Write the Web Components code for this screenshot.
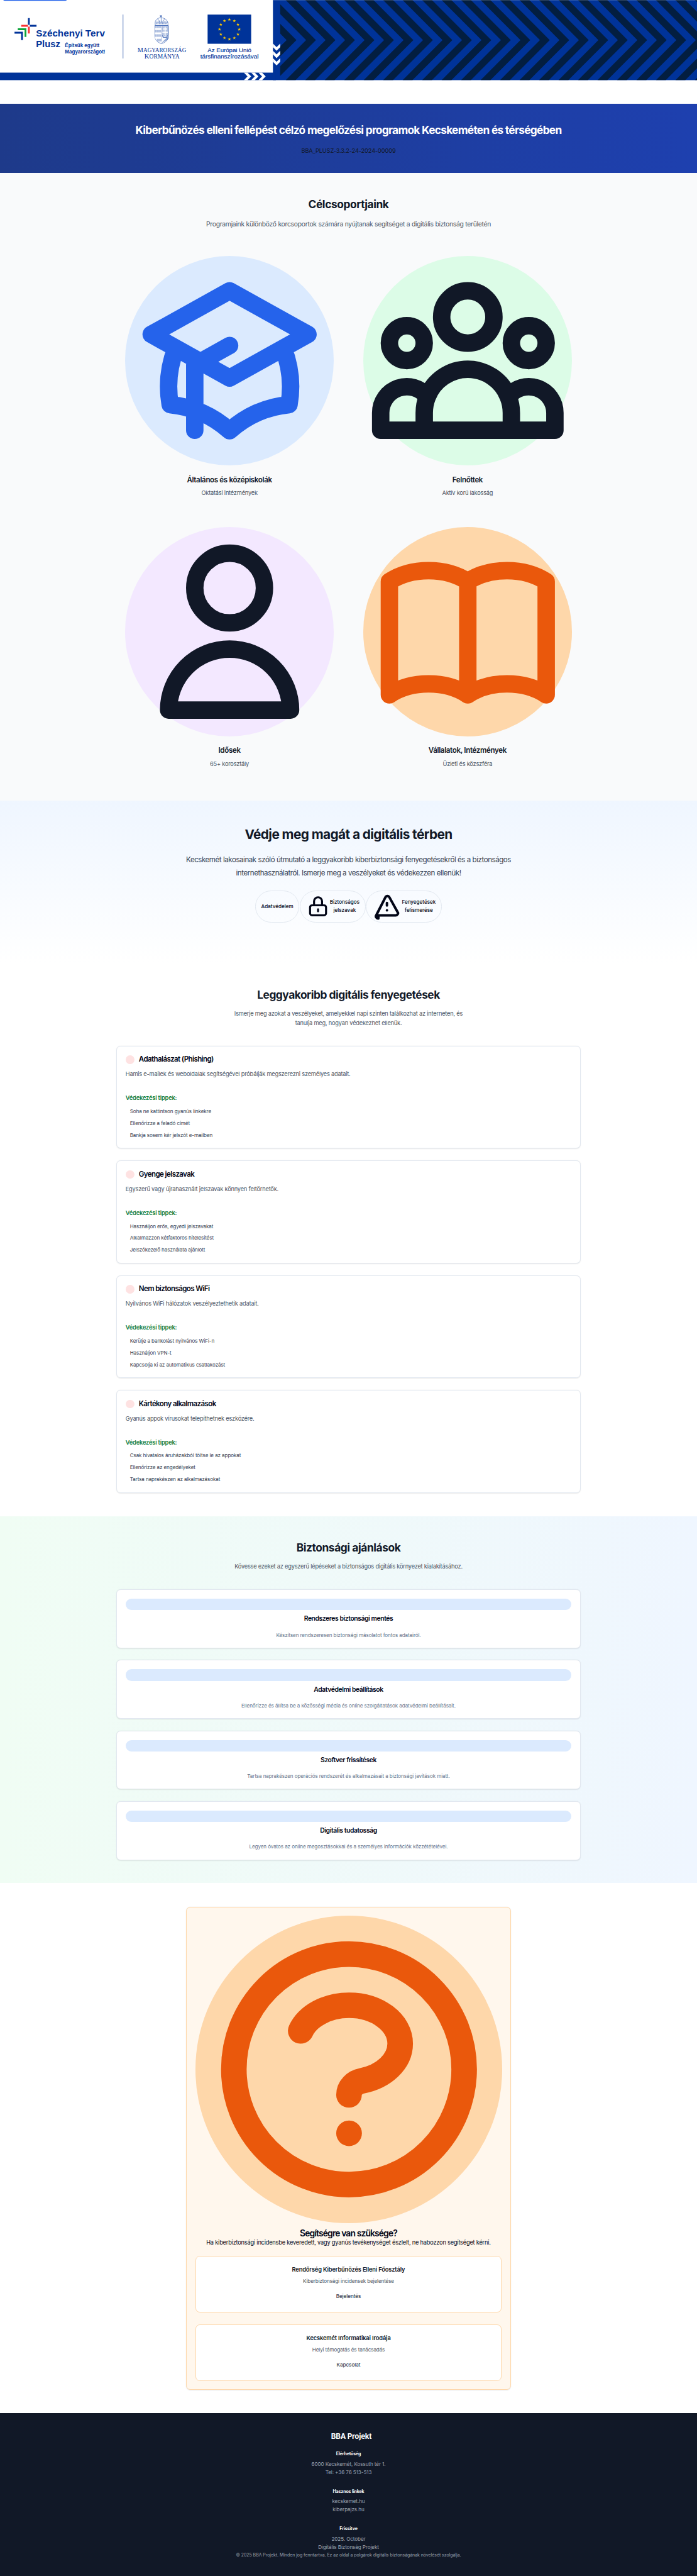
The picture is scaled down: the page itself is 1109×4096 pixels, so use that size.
<!DOCTYPE html>
<html lang="hu">
<head>
<meta charset="utf-8">
<title>BBA Projekt</title>
<style>
html,body{margin:0;padding:0;background:#fff}
body{height:4096px;overflow:hidden;font-family:Inter,"Liberation Sans",sans-serif;color:#020617}
</style>
</head>
<body>
<bba-page></bba-page>
<script>
const define = (name, css, html) => {
  customElements.define(name, class extends HTMLElement {
    constructor() {
      super();
      const t = document.createElement('template');
      t.innerHTML = `<style>*{box-sizing:border-box}h1,h2,h3,h4,p,ul{margin:0;padding:0}${css}</style>` + (typeof html === 'function' ? html(this) : html);
      this.attachShadow({ mode: 'open' }).append(t.content.cloneNode(true));
    }
  });
};

const ICONS = {
  school: 'M12 14l9-5-9-5-9 5 9 5zM12 14l6.16-3.422a12.083 12.083 0 01.665 6.479A11.952 11.952 0 0012 20.055a11.952 11.952 0 00-6.824-2.998 12.078 12.078 0 01.665-6.479L12 14zm-4 6v-7.5l4-2.222',
  group: 'M17 20h5v-2a3 3 0 00-5.356-1.857M17 20H7m10 0v-2c0-.656-.126-1.283-.356-1.857M7 20H2v-2a3 3 0 015.356-1.857M7 20v-2c0-.656.126-1.283.356-1.857m0 0a5.002 5.002 0 019.288 0M15 7a3 3 0 11-6 0 3 3 0 016 0zm6 3a2 2 0 11-4 0 2 2 0 014 0zM7 10a2 2 0 11-4 0 2 2 0 014 0z',
  user: 'M16 7a4 4 0 11-8 0 4 4 0 018 0zM12 14a7 7 0 00-7 7h14a7 7 0 00-7-7z',
  book: 'M12 6.253v13m0-13C10.832 5.477 9.246 5 7.5 5S4.168 5.477 3 6.253v13C4.168 18.477 5.754 18 7.5 18s3.332.477 4.5 1.253m0-13C13.168 5.477 14.754 5 16.5 5c1.747 0 3.332.477 4.5 1.253v13C19.832 18.477 18.247 18 16.5 18c-1.746 0-3.332.477-4.5 1.253',
  question: 'M8.228 9c.549-1.165 2.03-2 3.772-2 2.21 0 4 1.343 4 3 0 1.4-1.278 2.575-3.006 2.907-.542.104-.994.54-.994 1.093m0 3h.01M21 12a9 9 0 11-18 0 9 9 0 0118 0z',
  lock: 'M12 15v2m-6 4h12a2 2 0 002-2v-6a2 2 0 00-2-2H6a2 2 0 00-2 2v6a2 2 0 002 2zm10-10V7a4 4 0 00-8 0v4h8z',
  warn: 'M12 9v2m0 4h.01m-6.938 4h13.856c1.54 0 2.502-1.667 1.732-2.5L13.732 4c-.77-.833-1.964-.833-2.732 0L3.34 19c-.77.833.192 2.5 1.732 2.5z'
};

define('line-icon',
  ':host{display:block}svg{display:block;width:100%;height:100%}',
  el => `<svg viewBox="0 0 24 24" fill="none" stroke="currentColor" stroke-width="2" stroke-linecap="round" stroke-linejoin="round"><path d="${ICONS[el.getAttribute('name')]}"/></svg>`);

/* ---------- banner ---------- */
const stripes = () => {
  let s = '';
  for (let k = 0; k < 25; k++) {
    const a = 816.7 + 53.69 * k;
    s += `<path d="M${a - 137} 0H${a - 110}L${a} 110.3L${a - 110} 220.7H${a - 137}L${a - 27} 110.3z"/>`;
  }
  return s;
};
const stars = () => {
  let s = '';
  for (let i = 0; i < 12; i++) {
    const A = i * Math.PI / 6, cx = 632 + 27.2 * Math.sin(A), cy = 80.8 - 27.2 * Math.cos(A);
    let p = '';
    for (let j = 0; j < 10; j++) {
      const r = j % 2 ? 1.9 : 4.7, b = j * Math.PI / 5;
      p += `${(cx + r * Math.sin(b)).toFixed(2)},${(cy - r * Math.cos(b)).toFixed(2)} `;
    }
    s += `<polygon points="${p}"/>`;
  }
  return s;
};
const hatch = () => {
  let s = '';
  for (let x = 429; x < 446; x += 2.6) s += `M${x} 71V${x < 434 ? 106 : 114}`;
  for (let x = 448; x < 464; x += 2.6) s += `M${x} 71V98`;
  for (let x = 446; x < 462; x += 3.4) s += `M${x} ${118 - (x - 446) * .5}L464 ${100 + (x - 446) * .4}`;
  return s;
};
define('funding-banner',
  ':host{display:block;height:286px}svg{display:block;width:1921px;height:221px}text{font-family:"Liberation Sans",sans-serif;fill:#039}.s{font-family:"Liberation Serif",serif}',
  () => `<svg viewBox="0 0 1921 221">
  <defs><clipPath id="c"><rect x="772" y="0" width="1149" height="220.7"/></clipPath></defs>
  <rect x="752" width="1169" height="220.7" fill="#039"/>
  <g fill="#031e40" clip-path="url(#c)">${stripes()}</g>
  <rect x="752" width="1169" height="1" fill="#fff" opacity=".3"/>
  <rect y="200" width="760" height="20.7" fill="#039"/>
  <g fill="#fff">
    <path d="M752 120l10 10 10-10v10l-10 10-10-10zM752 140l10 10 10-10v10l-10 10-10-10zM752 160l10 10 10-10v10l-10 10-10-10z"/>
    <path d="M672 200h10l10 10.3-10 10.4h-10l10-10.4zM692 200h10l10 10.3-10 10.4h-10l10-10.4zM712 200h10l10 10.3-10 10.4h-10l10-10.4z"/>
  </g>
  <path d="M9 0H184Q183 2.2 179 2.2H14Q10 2.2 9 0z" fill="#2563eb"/>
  <g fill="none" stroke-width="5" stroke="#039">
    <path d="M79.5 50V68.6M82.2 71H100.6"/>
    <path stroke="#f93232" d="M58.5 71H77M79.5 73.6V92"/>
    <path stroke="#0ea53b" d="M49 80.6H70.2V101.6"/>
    <path d="M40 90H60.6V110.4"/>
  </g>
  <g font-weight="700">
    <text x="99" y="101.3" font-size="24" textLength="190" lengthAdjust="spacingAndGlyphs">Széchenyi Terv</text>
    <text x="99" y="129.3" font-size="24" textLength="67" lengthAdjust="spacingAndGlyphs">Plusz</text>
    <text x="179" y="129.8" font-size="14.5" textLength="95" lengthAdjust="spacingAndGlyphs">Építsük együtt</text>
    <text x="179" y="148" font-size="14.5" textLength="111" lengthAdjust="spacingAndGlyphs">Magyarországot!</text>
  </g>
  <path d="M339 40V161" stroke="#4a70b8" stroke-width="1.6"/>
  <g fill="none" stroke="#2b57ae" stroke-width="1.1">
    <path d="M426.5 70V97C426.5 110 434 117 445 120.3C456 117 464 110 464 97V70z"/>
    <path stroke-width=".9" d="${hatch()}"/>
    <path d="M428 70C425 58 431 49.5 443 49C456 49 465 58 462.500 70zM428.500 62H462.500M444 49V62M434 52Q439 55 440 62M455 52Q449 55 448 62"/>
    <path stroke-width="1.800" stroke-dasharray="1.500 1.500" d="M429 65.500H462M431 58.500H460"/>
    <path stroke-width="1.400" d="M441 41.500L446 48M446 41.500L441 48M440.500 44.500H446.500"/>
    <path stroke-width="1.400" d="M449 103L447.500 98L452 100L454.500 96.500L457 100L461.500 98L460 103z"/>
  </g>
  <g fill="#fff"><path d="M427 77h17v5.500h-17zM427 89h17v5.500h-17zM427 101.500h17v5.500h-16z"/>
  <path d="M453.300 73.500h3v5h4v3h-4v6h6v3h-6v8h-3v-8h-6v-3h6v-6h-4v-3h4z"/></g>
  <text class="s" x="379" y="143.500" textLength="134" lengthAdjust="spacingAndGlyphs" font-size="18.500">M<tspan font-size="16.500">AGYARORSZÁG</tspan></text>
  <text class="s" x="398" y="161" textLength="96.500" lengthAdjust="spacingAndGlyphs" font-size="18.500">K<tspan font-size="16.500">ORMÁNYA</tspan></text>
  <rect x="572" y="40.200" width="120" height="80.300" fill="#039"/>
  <g fill="#fc0">${stars()}</g>
  <text x="572" y="143.200" font-size="15.500" textLength="120.500" lengthAdjust="spacingAndGlyphs" stroke="#039" stroke-width=".3">Az Európai Unió</text>
  <text x="552" y="161" font-size="15.500" textLength="160.500" lengthAdjust="spacingAndGlyphs" stroke="#039" stroke-width=".3">társfinanszírozásával</text>
  </svg>`);

define('project-hero',
  `:host{display:block;height:190px;padding-top:56px;text-align:center;background:linear-gradient(90deg,#1e3a8a,#1e40af)}
  h1{font-size:30px;line-height:36px;letter-spacing:-1.24px;color:#fff}
  p{margin-top:25px;font-size:16px;line-height:24px;letter-spacing:-.22px;color:#111827}`,
  '<h1><slot></slot></h1><p><slot name="code"></slot></p>');

define('section-head',
  `:host{display:block;text-align:center;color:#111827}
  h2{font-size:30px;line-height:36px;letter-spacing:var(--hs,-.7px)}
  p{margin-top:21.700px;font-size:var(--ps,16px);line-height:var(--pl,24px);letter-spacing:var(--pls,-.36px);color:#4b5563}`,
  '<h2><slot></slot></h2><p><slot name="lead"></slot></p>');

define('audience-card',
  `:host{display:block;text-align:center}
  .disc{width:576px;height:576px;border-radius:50%;margin:0 auto;background:var(--disc)}
  line-icon{width:576px;height:576px;color:var(--ink,#111827)}
  h3{margin-top:25.700px;font-size:20px;font-weight:600;line-height:28px;letter-spacing:-.58px;color:#111827}
  p{margin-top:10.600px;font-size:16px;line-height:24px;letter-spacing:-.37px;color:#4b5563}`,
  el => `<div class="disc"><line-icon name="${el.getAttribute('icon')}"></line-icon></div><h3><slot></slot></h3><p><slot name="sub"></slot></p>`);

define('topic-pill',
  `:host{display:flex;align-items:center;justify-content:center;height:87.500px;width:var(--w);border:1px solid #e2e8f0;border-radius:44px;box-sizing:border-box;padding:0 15px;font-size:14px;font-weight:500;line-height:22.750px;text-align:center;color:#020617;white-space:nowrap}
  line-icon{flex:none;width:var(--i);height:var(--i)}`,
  el => (el.hasAttribute('icon') ? `<line-icon name="${el.getAttribute('icon')}"></line-icon>` : '') + '<span><slot></slot></span>');

define('threat-card',
  `:host{display:block;box-sizing:border-box;height:283.400px;border:1px solid #e2e8f0;border-radius:12px;background:#fff;box-shadow:0 1px 3px rgba(0,0,0,.09);padding:25px 24px 0}
  header{display:flex;align-items:center;gap:12.500px;height:24px}
  i{width:24px;height:24px;border-radius:50%;background:#fee2e2}
  h3{font-size:20px;font-weight:600;line-height:24px;letter-spacing:-1.05px;color:#020617}
  p{margin-top:16px;font-size:16px;line-height:24px;letter-spacing:-.36px;color:#4b5563}
  h4{margin-top:42px;font-size:16px;font-weight:600;line-height:24px;letter-spacing:-.27px;color:#15803d}
  ul{list-style:none;margin-top:13.600px;padding-left:12px;display:flex;flex-direction:column;gap:10.800px;font-size:14px;line-height:22px;letter-spacing:-.17px;color:#374151}`,
  el => `<header><i></i><h3>${el.getAttribute('heading')}</h3></header><p><slot></slot></p><h4>Védekezési tippek:</h4><ul>${el.getAttribute('tips').split('|').map(t => `<li>${t}</li>`).join('')}</ul>`);

define('tip-card',
  `:host{display:block;box-sizing:border-box;height:162.200px;border:1px solid #e2e8f0;border-radius:12px;background:#fff;box-shadow:0 1px 3px rgba(0,0,0,.09);padding:24px 24px 0;text-align:center}
  .bar{height:32px;border-radius:16px;background:#dbeafe}
  h3{margin-top:10.200px;font-size:18px;font-weight:600;line-height:28px;letter-spacing:-.73px;color:#020617}
  p{margin-top:19.400px;font-size:14px;line-height:22px;letter-spacing:-.165px;color:#64748b}`,
  '<div class="bar"></div><h3><slot></slot></h3><p><slot name="text"></slot></p>');

define('contact-card',
  `:host{display:block;box-sizing:border-box;height:155.700px;border:1px solid #fed7aa;border-radius:12px;background:#fff;padding-top:23.800px;text-align:center}
  h4{font-size:16px;font-weight:600;line-height:24px;letter-spacing:-.215px;color:#111827}
  p{margin-top:11px;font-size:14px;line-height:20px;letter-spacing:-.2px;color:#4b5563}
  a{display:block;margin-top:21.400px;font-size:14px;font-weight:500;line-height:20px;letter-spacing:-.11px;color:#374151}`,
  '<h4><slot></slot></h4><p><slot name="text"></slot></p><a><slot name="link"></slot></a>');

define('help-box',
  `:host{display:block;box-sizing:border-box;width:896px;height:1328.900px;margin:0 auto;border:1px solid #fed7aa;border-radius:12px;background:#fff7ed;box-shadow:0 1px 3px rgba(0,0,0,.09);padding:23.100px 24px 0;text-align:center;color:#020617}
  .disc{width:846px;height:846px;border-radius:50%;background:#fed7aa;color:#ea580c}
  line-icon{width:846px;height:846px}
  h3{margin-top:16.900px;font-size:24px;font-weight:600;line-height:24px;letter-spacing:-1.5px}
  p{font-size:16px;line-height:24px;letter-spacing:-.36px}
  .list{margin-top:25px;display:flex;flex-direction:column;gap:32.900px}`,
  '<div class="disc"><line-icon name="question"></line-icon></div><h3><slot name="title"></slot></h3><p><slot name="text"></slot></p><div class="list"><slot></slot></div>');

define('site-footer',
  `:host{display:block;height:460px;padding-top:49.700px;background:#111827;text-align:center;color:#fff}
  h2{padding-left:16px;font-size:20px;line-height:28px;letter-spacing:-.3px}
  h3{margin-top:32.500px;font-size:12px;line-height:16px;letter-spacing:-.15px}
  h2+h3{margin-top:26.900px}
  p{margin-top:9.600px;font-size:14px;line-height:22.400px;letter-spacing:-.14px;color:#9ca3af}
  small{display:block;margin-top:2.400px;font-size:12px;line-height:16px;letter-spacing:-.03px;color:#9ca3af}`,
  `<h2>BBA Projekt</h2>
  <h3>Elérhetőség</h3><p>6000 Kecskemét, Kossuth tér 1.<br>Tel: +36 76 513-513</p>
  <h3>Hasznos linkek</h3><p>kecskemet.hu<br>kiberpajzs.hu</p>
  <h3>Frissítve</h3><p>2025. October<br>Digitális Biztonság Projekt</p>
  <small>© 2025 BBA Projekt. Minden jog fenntartva. Ez az oldal a polgárok digitális biztonságának növelését szolgálja.</small>`);

define('bba-page',
  `:host{display:block;zoom:.5775;width:1920.400px;background:#fff}
  section{display:block}
  .groups{height:1728px;padding-top:70px;background:#f9fafb}
  .groups section-head{--ps:18px;--pl:28px;--pls:-.507px}
  .grid{display:grid;grid-template-columns:624px 624px;column-gap:32px;row-gap:81.900px;justify-content:center;margin-top:73.300px}
  .protect{height:448px;padding-top:72.700px;text-align:center;background:linear-gradient(180deg,#eff6ff,#fff)}
  .protect h2{font-size:36px;line-height:40px;letter-spacing:-1px;color:#111827}
  .protect p{margin-top:33.900px;font-size:20px;line-height:35px;letter-spacing:-.77px;color:#374151}
  .pills{display:flex;justify-content:center;gap:.6px;margin-top:31.600px}
  .threats{height:1522.100px;padding-top:70px}
  .threats section-head{--pl:25px;--hs:-.8px}
  .stack{display:flex;flex-direction:column;width:1280px;margin:49.500px auto 0;gap:32.600px}
  .tips{height:1011.200px;padding-top:70.200px;background:linear-gradient(90deg,#f0fdf4,#eff6ff)}
  .tips .stack{margin-top:50.100px;gap:32.200px}
  .help{height:1458.700px;padding-top:65.200px}`,
  `<funding-banner></funding-banner>
  <project-hero>Kiberbűnözés elleni fellépést célzó megelőzési programok Kecskeméten és térségében<span slot="code">BBA_PLUSZ-3.3.2-24-2024-00009</span></project-hero>
  <section class="groups">
    <section-head>Célcsoportjaink<span slot="lead">Programjaink különböző korcsoportok számára nyújtanak segítséget a digitális biztonság területén</span></section-head>
    <div class="grid">
      <audience-card icon="school" style="--disc:#dbeafe;--ink:#2563eb">Általános és középiskolák<span slot="sub">Oktatási intézmények</span></audience-card>
      <audience-card icon="group" style="--disc:#dcfce7">Felnőttek<span slot="sub">Aktív korú lakosság</span></audience-card>
      <audience-card icon="user" style="--disc:#f3e8ff">Idősek<span slot="sub">65+ korosztály</span></audience-card>
      <audience-card icon="book" style="--disc:#fed7aa;--ink:#ea580c">Vállalatok, Intézmények<span slot="sub">Üzleti és közszféra</span></audience-card>
    </div>
  </section>
  <section class="protect">
    <h2>Védje meg magát a digitális térben</h2>
    <p>Kecskemét lakosainak szóló útmutató a leggyakoribb kiberbiztonsági fenyegetésekről és a biztonságos<br>internethasználatról. Ismerje meg a veszélyeket és védekezzen ellenük!</p>
    <div class="pills">
      <topic-pill style="--w:122.400px">Adatvédelem</topic-pill>
      <topic-pill icon="lock" style="--w:182px;--i:66px">Biztonságos<br>jelszavak</topic-pill>
      <topic-pill icon="warn" style="--w:209.600px;--i:82px">Fenyegetések<br>felismerése</topic-pill>
    </div>
  </section>
  <section class="threats">
    <section-head>Leggyakoribb digitális fenyegetések<span slot="lead">Ismerje meg azokat a veszélyeket, amelyekkel napi szinten találkozhat az interneten, és<br>tanulja meg, hogyan védekezhet ellenük.</span></section-head>
    <div class="stack">
      <threat-card heading="Adathalászat (Phishing)" tips="Soha ne kattintson gyanús linkekre|Ellenőrizze a feladó címét|Bankja sosem kér jelszót e-mailben">Hamis e-mailek és weboldalak segítségével próbálják megszerezni személyes adatait.</threat-card>
      <threat-card heading="Gyenge jelszavak" tips="Használjon erős, egyedi jelszavakat|Alkalmazzon kétfaktoros hitelesítést|Jelszókezelő használata ajánlott">Egyszerű vagy újrahasznált jelszavak könnyen feltörhetők.</threat-card>
      <threat-card heading="Nem biztonságos WiFi" tips="Kerülje a bankolást nyilvános WiFi-n|Használjon VPN-t|Kapcsolja ki az automatikus csatlakozást">Nyilvános WiFi hálózatok veszélyeztethetik adatait.</threat-card>
      <threat-card heading="Kártékony alkalmazások" tips="Csak hivatalos áruházakból töltse le az appokat|Ellenőrizze az engedélyeket|Tartsa naprakészen az alkalmazásokat">Gyanús appok vírusokat telepíthetnek eszközére.</threat-card>
    </div>
  </section>
  <section class="tips">
    <section-head>Biztonsági ajánlások<span slot="lead">Kövesse ezeket az egyszerű lépéseket a biztonságos digitális környezet kialakításához.</span></section-head>
    <div class="stack">
      <tip-card>Rendszeres biztonsági mentés<span slot="text">Készítsen rendszeresen biztonsági másolatot fontos adatairól.</span></tip-card>
      <tip-card>Adatvédelmi beállítások<span slot="text">Ellenőrizze és állítsa be a közösségi média és online szolgáltatások adatvédelmi beállításait.</span></tip-card>
      <tip-card>Szoftver frissítések<span slot="text">Tartsa naprakészen operációs rendszerét és alkalmazásait a biztonsági javítások miatt.</span></tip-card>
      <tip-card>Digitális tudatosság<span slot="text">Legyen óvatos az online megosztásokkal és a személyes információk közzétételével.</span></tip-card>
    </div>
  </section>
  <section class="help">
    <help-box>
      <span slot="title">Segítségre van szüksége?</span>
      <span slot="text">Ha kiberbiztonsági incidensbe keveredett, vagy gyanús tevékenységet észlelt, ne habozzon segítséget kérni.</span>
      <contact-card>Rendőrség Kiberbűnözés Elleni Főosztály<span slot="text">Kiberbiztonsági incidensek bejelentése</span><span slot="link">Bejelentés</span></contact-card>
      <contact-card>Kecskemét Informatikai Irodája<span slot="text">Helyi támogatás és tanácsadás</span><span slot="link">Kapcsolat</span></contact-card>
    </help-box>
  </section>
  <site-footer></site-footer>`);
</script>
</body>
</html>
